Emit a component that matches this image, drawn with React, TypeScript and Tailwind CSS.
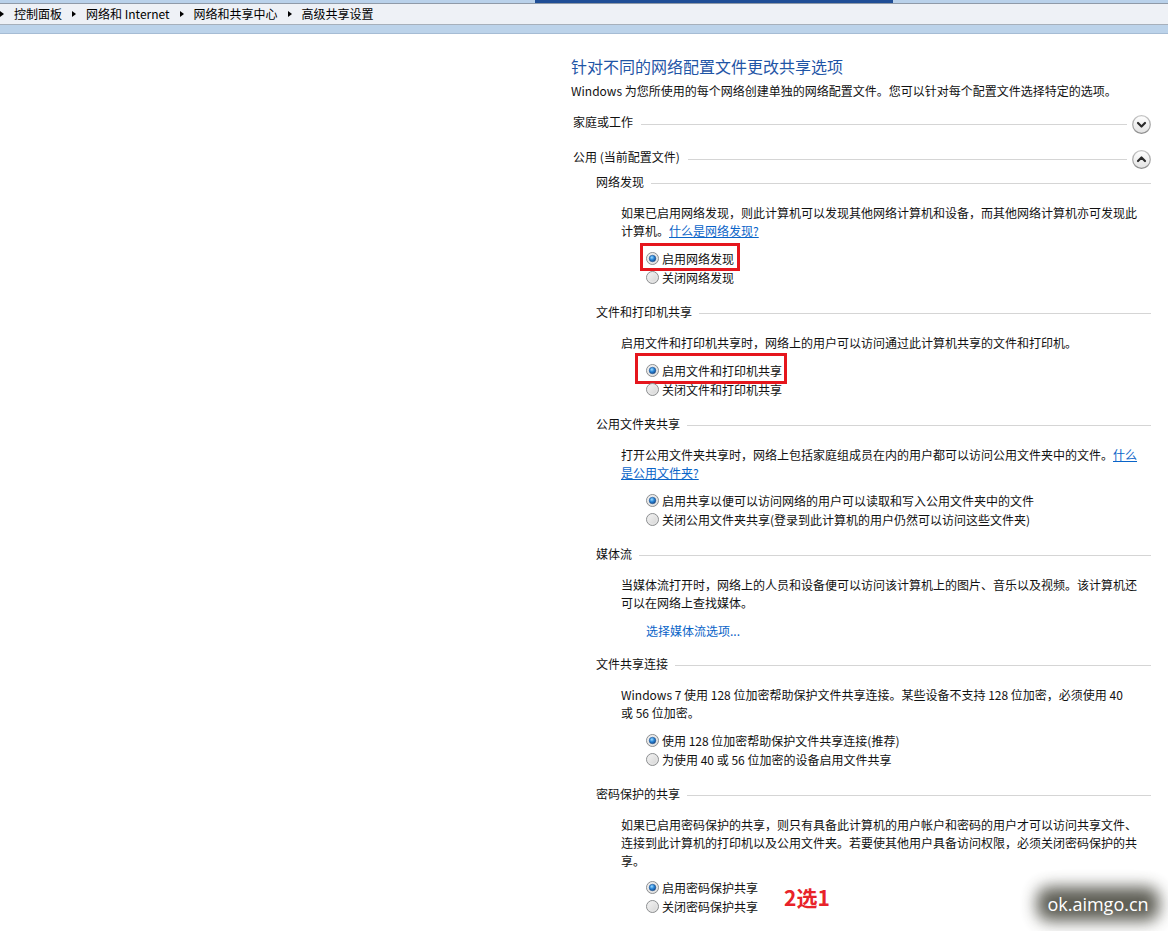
import React from "react";

const LINE = "h-px flex-1 bg-[#d5d5d5]";

function Radio({ checked }: { checked?: boolean }) {
  return (
    <svg width="13" height="13" viewBox="0 0 13 13" className="shrink-0">
      <defs>
        <linearGradient id="rb-fill" x1="0" y1="0" x2="1" y2="1">
          <stop offset="0" stopColor="#f6f6f6" />
          <stop offset="1" stopColor="#d2d2d2" />
        </linearGradient>
        <radialGradient id="rb-dot" cx="0.4" cy="0.35" r="0.75">
          <stop offset="0" stopColor="#9fdcff" />
          <stop offset="0.45" stopColor="#2a86d8" />
          <stop offset="1" stopColor="#0b3a78" />
        </radialGradient>
      </defs>
      <circle cx="6.5" cy="6.5" r="6" fill="url(#rb-fill)" stroke="#8c8e90" />
      <circle cx="6.5" cy="6.5" r="4.6" fill="none" stroke="#e9e9e9" strokeWidth="0.8" />
      {checked && <circle cx="6.5" cy="6.5" r="3.3" fill="url(#rb-dot)" stroke="#1d4f8c" strokeWidth="0.5" />}
    </svg>
  );
}

function Chevron({ up }: { up?: boolean }) {
  return (
    <svg width="19" height="19" viewBox="0 0 19 19" className="shrink-0">
      <defs>
        <linearGradient id="cb-fill" x1="0" y1="0" x2="0" y2="1">
          <stop offset="0" stopColor="#ffffff" />
          <stop offset="1" stopColor="#e2e2e2" />
        </linearGradient>
        <linearGradient id="cb-ring" x1="0" y1="0" x2="0" y2="1">
          <stop offset="0" stopColor="#c4c4c4" />
          <stop offset="1" stopColor="#8e8e8e" />
        </linearGradient>
      </defs>
      <circle cx="9.5" cy="9.5" r="8.8" fill="url(#cb-fill)" stroke="url(#cb-ring)" strokeWidth="1.2" />
      <path
        d={up ? "M6 11 L9.5 7.5 L13 11" : "M6 8 L9.5 11.5 L13 8"}
        fill="none"
        stroke="#2b2b2b"
        strokeWidth="2.2"
        strokeLinecap="round"
        strokeLinejoin="round"
      />
    </svg>
  );
}

function Crumb({ children }: { children: React.ReactNode }) {
  return (
    <>
      <span className="h-0 w-0 border-y-[3.5px] border-l-[4px] border-y-transparent border-l-black" />
      <span className="leading-[20px]">{children}</span>
    </>
  );
}

function ProfileHeader({ title, open }: { title: string; open?: boolean }) {
  return (
    <div className="flex h-[20px] items-center pl-[2px]">
      <span className="pb-[5px] leading-[18px]">{title}</span>
      <div className={`ml-[8px] ${LINE}`} />
      <div className="ml-[5px]">
        <Chevron up={open} />
      </div>
    </div>
  );
}

function SubHeader({ title }: { title: string }) {
  return (
    <div className="flex h-[18px] items-center gap-[7px]">
      <span className="leading-[18px]">{title}</span>
      <div className={`mt-[2px] ${LINE}`} />
    </div>
  );
}

// red annotation frames drawn over the screenshot
const BOX_SMALL = "-left-[6px] -right-[6px] -top-[6px] -bottom-[3px]";
const BOX_WIDE = "-left-[11px] -right-[5px] -top-[8px] -bottom-[4px]";

function Option({ label, checked, box }: { label: string; checked?: boolean; box?: string }) {
  return (
    <div className="relative flex h-[19px] w-fit items-center gap-[3px]">
      <Radio checked={checked} />
      <span className="leading-[19px]">{label}</span>
      {box && <div className={`absolute border-[3px] border-[#e5161d] ${box}`} />}
    </div>
  );
}

function Para({ children }: { children: React.ReactNode }) {
  return <p className="ml-[25px] mt-[13px] w-[520px] leading-[18px]">{children}</p>;
}

function Link({ children }: { children: React.ReactNode }) {
  return <span className="text-[#0a64c8] underline">{children}</span>;
}

function Section({
  title,
  text,
  options,
  box,
}: {
  title: string;
  text: React.ReactNode;
  options: string[];
  box?: string;
}) {
  return (
    <section className="mb-[16px]">
      <SubHeader title={title} />
      <Para>{text}</Para>
      <div className="mt-[9px] pl-[50px]">
        {options.map((o, i) => (
          <Option key={o} label={o} checked={i === 0} box={i === 0 ? box : undefined} />
        ))}
      </div>
    </section>
  );
}

export default function App() {
  return (
    <div className="relative h-[931px] w-[1168px] overflow-hidden bg-white font-['Noto_Sans_CJK_SC',sans-serif] text-[12px] text-[#111]">
      <div className="flex h-[4px] border-b border-[#8f9aa8] bg-[#b9d1ea]">
        <div className="w-[535px]" />
        <div className="h-[3px] w-[358px] bg-[#1f4e96]" />
      </div>
      <div className="flex h-[21px] items-center gap-[10px] border-b border-[#a7b0bb] bg-[#eef1f6] text-black">
        <Crumb>控制面板</Crumb>
        <Crumb>网络和 Internet</Crumb>
        <Crumb>网络和共享中心</Crumb>
        <Crumb>高级共享设置</Crumb>
      </div>
      <div className="h-[9px] border-b border-[#a6bcd4] bg-[#bcd3ea]" />

      <div className="flex">
        <div className="w-[571px]" />
        <main className="w-[580px] pt-[21px]">
          <h1 className="text-[16px] leading-[22px] text-[#1f55a6]">针对不同的网络配置文件更改共享选项</h1>
          <p className="mt-[5px] leading-[18px]">
            Windows 为您所使用的每个网络创建单独的网络配置文件。您可以针对每个配置文件选择特定的选项。
          </p>

          <div className="mt-[14px]">
            <ProfileHeader title="家庭或工作" />
          </div>
          <div className="mt-[15px]">
            <ProfileHeader title="公用 (当前配置文件)" open />
          </div>

          <div className="mt-[4px] pl-[25px]">
            <Section
              title="网络发现"
              box={BOX_SMALL}
              text={
                <>
                  如果已启用网络发现，则此计算机可以发现其他网络计算机和设备，而其他网络计算机亦可发现此计算机。
                  <Link>什么是网络发现?</Link>
                </>
              }
              options={["启用网络发现", "关闭网络发现"]}
            />
            <Section
              title="文件和打印机共享"
              box={BOX_WIDE}
              text="启用文件和打印机共享时，网络上的用户可以访问通过此计算机共享的文件和打印机。"
              options={["启用文件和打印机共享", "关闭文件和打印机共享"]}
            />
            <Section
              title="公用文件夹共享"
              text={
                <>
                  打开公用文件夹共享时，网络上包括家庭组成员在内的用户都可以访问公用文件夹中的文件。
                  <Link>什么是公用文件夹?</Link>
                </>
              }
              options={[
                "启用共享以便可以访问网络的用户可以读取和写入公用文件夹中的文件",
                "关闭公用文件夹共享(登录到此计算机的用户仍然可以访问这些文件夹)",
              ]}
            />

            <section className="mb-[15px]">
              <SubHeader title="媒体流" />
              <Para>当媒体流打开时，网络上的人员和设备便可以访问该计算机上的图片、音乐以及视频。该计算机还可以在网络上查找媒体。</Para>
              <div className="mt-[10px] pl-[50px] leading-[18px] text-[#0a64c8]">选择媒体流选项...</div>
            </section>

            <Section
              title="文件共享连接"
              text={
                <>
                  Windows 7 使用 128 位加密帮助保护文件共享连接。某些设备不支持 128 位加密，必须使用 40
                  <br />或 56 位加密。
                </>
              }
              options={["使用 128 位加密帮助保护文件共享连接(推荐)", "为使用 40 或 56 位加密的设备启用文件共享"]}
            />

            <section>
              <SubHeader title="密码保护的共享" />
              <Para>
                如果已启用密码保护的共享，则只有具备此计算机的用户帐户和密码的用户才可以访问共享文件、连接到此计算机的打印机以及公用文件夹。若要使其他用户具备访问权限，必须关闭密码保护的共享。
              </Para>
              <div className="mt-[8px] flex items-center pl-[50px]">
                <div>
                  <Option label="启用密码保护共享" checked />
                  <Option label="关闭密码保护共享" />
                </div>
                <span className="ml-[26px] text-[21px] font-bold leading-[24px] text-[#e8232a]">2选1</span>
              </div>
            </section>
          </div>
        </main>
      </div>

      <div className="absolute left-[1032px] top-[882px] flex h-[44px] w-[132px] items-center justify-center">
        <div className="absolute inset-[5px] rounded-[12px] bg-[#35352a] opacity-80 blur-[8px]" />
        <span className="relative font-['Open_Sans',sans-serif] text-[18px] text-white">ok.aimgo.cn</span>
      </div>
    </div>
  );
}
